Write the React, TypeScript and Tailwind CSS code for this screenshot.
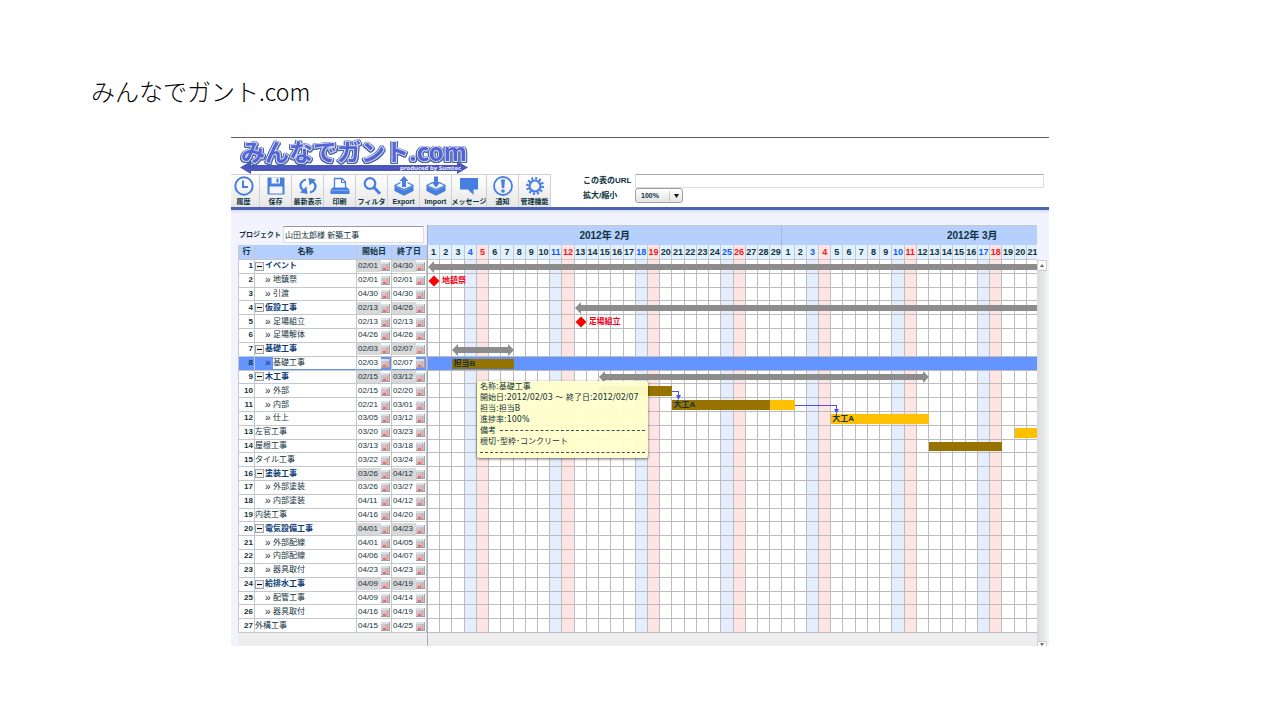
import type { ReactNode } from "react";
import clsx from "clsx";

type Kind = "group" | "child" | "task";

type Row = {
  name: string;
  start: string;
  end: string;
  kind: Kind;
};

const rows: Row[] = [
  { name: "イベント", start: "02/01", end: "04/30", kind: "group" },
  { name: "地鎮祭", start: "02/01", end: "02/01", kind: "child" },
  { name: "引渡", start: "04/30", end: "04/30", kind: "child" },
  { name: "仮設工事", start: "02/13", end: "04/26", kind: "group" },
  { name: "足場組立", start: "02/13", end: "02/13", kind: "child" },
  { name: "足場解体", start: "04/26", end: "04/26", kind: "child" },
  { name: "基礎工事", start: "02/03", end: "02/07", kind: "group" },
  { name: "基礎工事", start: "02/03", end: "02/07", kind: "child" },
  { name: "木工事", start: "02/15", end: "03/12", kind: "group" },
  { name: "外部", start: "02/15", end: "02/20", kind: "child" },
  { name: "内部", start: "02/21", end: "03/01", kind: "child" },
  { name: "仕上", start: "03/05", end: "03/12", kind: "child" },
  { name: "左官工事", start: "03/20", end: "03/23", kind: "task" },
  { name: "屋根工事", start: "03/13", end: "03/18", kind: "task" },
  { name: "タイル工事", start: "03/22", end: "03/24", kind: "task" },
  { name: "塗装工事", start: "03/26", end: "04/12", kind: "group" },
  { name: "外部塗装", start: "03/26", end: "03/27", kind: "child" },
  { name: "内部塗装", start: "04/11", end: "04/12", kind: "child" },
  { name: "内装工事", start: "04/16", end: "04/20", kind: "task" },
  { name: "電気設備工事", start: "04/01", end: "04/23", kind: "group" },
  { name: "外部配線", start: "04/01", end: "04/05", kind: "child" },
  { name: "内部配線", start: "04/06", end: "04/07", kind: "child" },
  { name: "器具取付", start: "04/23", end: "04/23", kind: "child" },
  { name: "給排水工事", start: "04/09", end: "04/19", kind: "group" },
  { name: "配管工事", start: "04/09", end: "04/14", kind: "child" },
  { name: "器具取付", start: "04/16", end: "04/19", kind: "child" },
  { name: "外構工事", start: "04/15", end: "04/25", kind: "task" },
];

const selectedRow = 8;

// 2012/02/01 is a Wednesday; day 1 to 29 is February, the rest March
const days = Array.from({ length: 50 }, (_, i) => ({
  label: i < 29 ? i + 1 : i - 28,
  saturday: i % 7 === 3,
  sunday: i % 7 === 4,
}));

type Bar = { row: number; from: number; to: number; label?: string; done: boolean };

const bars: Bar[] = [
  { row: 8, from: 3, to: 7, label: "担当B", done: true },
  { row: 10, from: 15, to: 20, label: "大工A", done: true },
  { row: 11, from: 21, to: 28, label: "大工A", done: true },
  { row: 11, from: 29, to: 30, done: false },
  { row: 12, from: 34, to: 41, label: "大工A", done: false },
  { row: 13, from: 49, to: 50, done: false },
  { row: 14, from: 42, to: 47, done: true },
];

const summaries = [
  { row: 1, from: 1, to: 50, open: true },
  { row: 4, from: 13, to: 50, open: true },
  { row: 7, from: 3, to: 7, open: false },
  { row: 9, from: 15, to: 41, open: false },
];

const milestones = [
  { row: 2, day: 1, label: "地鎮祭" },
  { row: 5, day: 13, label: "足場組立" },
];

const links = [
  { row: 10, from: 21, to: 21 },
  { row: 11, from: 31, to: 34 },
];

function Icon({ children }: { children: ReactNode }) {
  return (
    <svg viewBox="0 0 20 20" className="h-5 w-5 shrink-0" fill="none" stroke="#477fe0" strokeWidth="2" aria-hidden="true">
      {children}
    </svg>
  );
}

const tools: { label: string; width: string; icon: ReactNode }[] = [
  {
    label: "履歴",
    width: "w-[29px] pr-[3px]",
    icon: (
      <Icon>
        <circle cx="10" cy="10" r="8.7" />
        <path d="M9 4.5V11h5" />
      </Icon>
    ),
  },
  {
    label: "保存",
    width: "w-8",
    icon: (
      <Icon>
        <path d="M1.5 1.5h17v17h-17z" fill="#477fe0" stroke="none" />
        <path d="M5.5 1.5h8.5v6H5.5z" fill="#f4f6fb" stroke="none" />
        <path d="M10.5 2.5h2v4h-2z" fill="#477fe0" stroke="none" />
        <path d="M3.5 10.5h13v7h-13z" fill="#f4f6fb" stroke="none" />
      </Icon>
    ),
  },
  {
    label: "最新表示",
    width: "w-8",
    icon: (
      <Icon>
        <path d="M8 3.5C3.5 4.5 1 9 3.500 12.500L6 15" strokeWidth="2.200" />
        <path d="M2 16.500 9.500 18 8.500 10.500z" fill="#477fe0" stroke="none" />
        <path d="M12 16.500C16.500 15.500 19 11 16.500 7.500L14 5" strokeWidth="2.200" />
        <path d="M18 3.500 10.500 2l1 7.500z" fill="#477fe0" stroke="none" />
      </Icon>
    ),
  },
  {
    label: "印刷",
    width: "w-8",
    icon: (
      <Icon>
        <path d="M4.5 12V2.5H12l3.5 3.5v6" strokeWidth="1.3" fill="#fff" />
        <path d="M11.5 2.5v4h4" strokeWidth="1.2" />
        <path d="M2.5 11.5h15l2 2.5v4H.5v-4z" fill="#477fe0" stroke="none" />
        <path d="M1.5 14.5h17" stroke="#8fb3f0" strokeWidth="0.8" />
      </Icon>
    ),
  },
  {
    label: "フィルタ",
    width: "w-8",
    icon: (
      <Icon>
        <circle cx="8" cy="7.5" r="5.3" strokeWidth="2.2" />
        <path d="m12 11.5 6 6.200" strokeWidth="3" />
      </Icon>
    ),
  },
  {
    label: "Export",
    width: "w-8",
    icon: (
      <Icon>
        <path d="M.5 10 10 14.5 19.5 10v5L10 19.800.5 15z" fill="#477fe0" stroke="none" />
        <path d="M6.500 6.500.8 9.500 10 13.500l9.200-4-5.700-3" strokeWidth="1.3" />
        <path d="M10 0 14.500 5H12v6H8V5H5.500z" fill="#477fe0" stroke="none" />
      </Icon>
    ),
  },
  {
    label: "Import",
    width: "w-8",
    icon: (
      <Icon>
        <path d="M.5 10 10 14.5 19.5 10v5L10 19.800.5 15z" fill="#477fe0" stroke="none" />
        <path d="M6.500 6.500.8 9.500 10 13.500l9.200-4-5.700-3" strokeWidth="1.3" />
        <path d="M8 .5h4V6h2.500L10 11.500 5.500 6H8z" fill="#477fe0" stroke="none" />
      </Icon>
    ),
  },
  {
    label: "メッセージ",
    width: "w-[35px]",
    icon: (
      <Icon>
        <path d="M1 2h18v11.500h-4.500V19L9 13.500H1z" fill="#477fe0" stroke="none" />
      </Icon>
    ),
  },
  {
    label: "通知",
    width: "w-8",
    icon: (
      <Icon>
        <circle cx="10" cy="10" r="9" strokeWidth="1.8" />
        <path d="M8 3.500h4L11.200 12H8.800z" fill="#477fe0" stroke="none" />
        <circle cx="10" cy="15" r="1.800" fill="#477fe0" stroke="none" />
      </Icon>
    ),
  },
  {
    label: "管理機能",
    width: "w-8",
    icon: (
      <Icon>
        <circle cx="10" cy="10" r="5.5" strokeWidth="2.2" />
        <circle cx="10" cy="10" r="7.7" strokeWidth="2.6" strokeDasharray="2.015 2.015" />
      </Icon>
    ),
  },
];

function Logo() {
  return (
    <svg viewBox="0 0 240 36" className="block h-9 w-60 overflow-visible font-['Noto_Sans_CJK_JP',sans-serif]">
      <path d="M9 29.500 20 23v4h206v-4l11 6.500L226 36v-3H20v3z" fill="#4c57bd" />
      <text
        x="10"
        y="23"
        fontSize="24"
        fontWeight="700"
        fill="#5563d8"
        stroke="#d5e0f5"
        strokeWidth="2"
        strokeLinejoin="round"
        className="[filter:drop-shadow(1px_0_0_#46609c)_drop-shadow(-1px_0_0_#46609c)_drop-shadow(0_1px_0_#46609c)] [paint-order:stroke]"
      >
        みんなでガント.com
      </text>
      <text x="169" y="32" fontSize="6" fontWeight="700" fill="#eef" className="font-['Open_Sans',sans-serif]">
        produced by Sumtec
      </text>
    </svg>
  );
}

function Toolbar() {
  return (
    <header className="border-t border-[#606060] bg-white">
      <Logo />
      <div className="flex items-start">
        <div className="flex shrink-0">
          {tools.map((tool) => (
            <button
              key={tool.label}
              type="button"
              className={clsx(
                "flex h-[33px] flex-col items-center overflow-hidden border-t border-r border-[#d0d0d0] bg-linear-to-b from-white to-[#e6e6e6] pt-px text-[7px] leading-[12px] font-bold whitespace-nowrap text-[#0b333c]",
                tool.width,
              )}
            >
              {tool.icon}
              <span>{tool.label}</span>
            </button>
          ))}
        </div>
        <form className="ml-8 grid min-w-0 flex-1 grid-cols-[52px_1fr] items-center pr-[5px] text-[8px] leading-3 font-bold text-[#0b333c]">
          <label htmlFor="url">この表のURL</label>
          <input
            id="url"
            type="text"
            className="h-3.5 w-full border border-[#ddd] border-t-[#aaa] bg-white px-1 font-normal outline-none"
          />
          <label htmlFor="zoom">拡大/縮小</label>
          <div className="grid w-12 items-center">
            <select
              id="zoom"
              defaultValue="100"
              className="col-start-1 row-start-1 h-[15px] w-12 appearance-none rounded-[3px] border border-[#a0a0a0] bg-linear-to-b from-white to-[#e4e4e4] pl-[5px] text-[7px] leading-3 font-bold"
            >
              <option value="100">100%</option>
              <option value="200">200%</option>
            </select>
            <span className="pointer-events-none col-start-1 row-start-1 mr-1 flex h-2.5 items-center justify-self-end border-l border-[#ccc] pl-1">
              <svg viewBox="0 0 5 4" className="h-1 w-[5px]" aria-hidden="true">
                <path d="M0 0h5L2.500 4z" fill="#111" />
              </svg>
            </span>
          </div>
        </form>
      </div>
      <div className="h-[3px] bg-[#4c65b3]" />
    </header>
  );
}

function CalendarIcon() {
  return (
    <svg viewBox="0 0 10 10" className="block h-2.5 w-2.5" aria-hidden="true">
      <path d="M0 1h9v9H0z" fill="#c6c9ce" />
      <path d="M0 1h9v2H0z" fill="#d8e0e8" />
      <path d="M0 9.500h9M8.500 1v9M6.500 3v7" stroke="#94989e" strokeWidth="0.8" />
      <path d="M1 9V6h2V5h2V3h1.500v6z" fill="#eeaeac" />
      <path d="M2 7h3v2H2z" fill="#dc7470" />
    </svg>
  );
}

function DateCell({ value, grouped, selected }: { value: string; grouped: boolean; selected: boolean }) {
  return (
    <td className={clsx("border-r border-b border-[#c4c8ca] p-0", selected && "bg-[#6495ff]")}>
      <div className="flex items-center justify-between">
        <span className={clsx("w-6 pl-px leading-[12px]", grouped ? "bg-[#d9d9d9]" : "bg-white")}>{value}</span>
        <button type="button" aria-label={`${value} カレンダー`}>
          <CalendarIcon />
        </button>
      </div>
    </td>
  );
}

function NameCell({ row, selected }: { row: Row; selected: boolean }) {
  return (
    <td className={clsx("border-r border-b border-[#c4c8ca] p-0", selected && "bg-[#6495ff]")}>
      <div className="flex items-center whitespace-nowrap">
        {row.kind === "group" && (
          <button
            type="button"
            aria-label={`${row.name}を閉じる`}
            className="mr-px flex h-[9px] w-[9px] items-center justify-center border border-[#9aa4b0] bg-[#f4f1ea]"
          >
            <span className="h-px w-[5px] bg-black" />
          </button>
        )}
        {row.kind === "child" && <span className="w-[18px] pl-2.5 text-[10px] leading-[12px]">»</span>}
        <span
          className={clsx(
            "flex-1 leading-[12px]",
            row.kind === "group" && "font-bold text-[#0a3c78]",
            selected && "bg-white",
          )}
        >
          {row.name}
        </span>
      </div>
    </td>
  );
}

function TaskTable() {
  return (
    <section className="w-[190px] shrink-0 border-r border-[#a8acb0] bg-[#eee]">
      <div className="flex h-5 items-center justify-between bg-[#f3f3ff] pr-[3px]">
        <label htmlFor="project" className="pl-px text-[7px] font-bold whitespace-nowrap">
          プロジェクト
        </label>
        <input
          id="project"
          type="text"
          defaultValue="山田太郎様 新築工事"
          className="mb-0.5 h-[17px] w-[141px] border border-[#ddd] border-t-[#999] bg-white px-px text-[8px] outline-none"
        />
      </div>
      <table className="h-[388px] w-full table-fixed border-separate border-spacing-0 border-l border-[#c4c8ca] bg-white text-[8px]">
        <colgroup>
          <col className="w-4" />
          <col />
          <col className="w-[35px]" />
          <col className="w-[35px]" />
        </colgroup>
        <thead>
          <tr className="h-[15px] bg-[#b5cfff] leading-[12px]">
            {["行", "名称", "開始日", "終了日"].map((head) => (
              <th key={head} scope="col" className="h-[15px] border-r border-b border-[#c4c8ca] p-0">
                {head}
              </th>
            ))}
          </tr>
        </thead>
        <tbody>
          {rows.map((row, i) => {
            const selected = i + 1 === selectedRow;
            return (
              <tr key={i}>
                <th
                  scope="row"
                  className={clsx(
                    "border-r border-b border-[#c4c8ca] p-0 pr-px text-right leading-[12px]",
                    selected && "bg-[#6495ff]",
                  )}
                >
                  {i + 1}
                </th>
                <NameCell row={row} selected={selected} />
                <DateCell value={row.start} grouped={row.kind === "group"} selected={selected} />
                <DateCell value={row.end} grouped={row.kind === "group"} selected={selected} />
              </tr>
            );
          })}
        </tbody>
      </table>
    </section>
  );
}

function Tooltip() {
  return (
    <div
      role="tooltip"
      className="absolute top-[121px] left-[49px] z-30 w-[171px] overflow-hidden rounded-xs bg-[#ffffcc]/95 px-[3px] font-['DejaVu_Sans','Noto_Sans_CJK_JP',sans-serif] text-[8px] leading-[11px] whitespace-nowrap shadow-[0_1px_3px_rgba(0,0,0,0.6)]"
    >
      <p>名称:基礎工事</p>
      <p>開始日:2012/02/03 ～ 終了日:2012/02/07</p>
      <p>担当:担当B</p>
      <p>進捗率:100%</p>
      <p className="flex items-center gap-1">
        備考 <span className="flex-1 border-t border-dashed border-[#3c5058]" />
      </p>
      <p>根切･型枠･コンクリート</p>
      <p className="flex h-[11px] items-center">
        <span className="flex-1 border-t border-dashed border-[#3c5058]" />
      </p>
    </div>
  );
}

function Chart() {
  return (
    <section className="min-w-0 flex-1 overflow-hidden bg-[#eee] pb-[13px]">
      <div className="-mr-0.5 grid h-5 grid-cols-[29fr_21fr] border-t border-[#c4c8ca] bg-[#b5cfff] text-center text-[10px] leading-5 font-bold">
        <div className="border-r border-[#a9b8d4]">2012年 2月</div>
        <div className="overflow-hidden">
          <div className="w-[148%]">2012年 3月</div>
        </div>
      </div>
      <div className="-mr-0.5 grid h-[15px] grid-cols-[repeat(50,minmax(0,1fr))] overflow-hidden bg-[#e1f1ff] text-center text-[9px] leading-[14px] font-bold">
        {days.map((day, i) => (
          <div
            key={i}
            className={clsx(
              "flex justify-center border-r border-b border-[#c4c8ca]",
              day.saturday && "text-[#1458ff]",
              day.sunday && "bg-[#ffe4e4] text-[#f01828]",
            )}
          >
            {day.label}
          </div>
        ))}
      </div>
      <div className="relative -mr-0.5">
        <div className="grid h-[373px] grid-cols-[repeat(50,minmax(0,1fr))] grid-rows-[repeat(27,minmax(0,1fr))] overflow-hidden bg-white">
          {days.map((day, i) => (
            <div
              key={i}
              className={clsx(
                "row-span-full border-r border-[#bcbcbc]",
                day.saturday && "bg-[#e4eeff]",
                day.sunday && "bg-[#ffe4e4]",
              )}
              style={{ gridColumn: i + 1 }}
            />
          ))}
          {rows.map((_, i) => (
            <div
              key={i}
              className={clsx("col-span-full border-b border-[#bcbcbc]", i + 1 === selectedRow && "bg-[#6495ff]")}
              style={{ gridRow: i + 1 }}
            />
          ))}
          {summaries.map((s) => (
            <div
              key={s.row}
              className="z-10 flex items-center text-[#8c8c8c]"
              style={{ gridRow: s.row, gridColumn: `${s.from} / ${s.to + 1}` }}
            >
              <svg viewBox="0 0 6 12" className="h-3 w-1.5 shrink-0" aria-hidden="true">
                <path d="M6 0v12L0 6z" fill="currentColor" />
              </svg>
              <span className="h-1.5 flex-1 bg-current" />
              {!s.open && (
                <svg viewBox="0 0 6 12" className="h-3 w-1.5 shrink-0" aria-hidden="true">
                  <path d="M0 0v12l6-6z" fill="currentColor" />
                </svg>
              )}
            </div>
          ))}
          {milestones.map((m) => (
            <div
              key={m.row}
              className="z-10 flex items-center gap-0.5 text-[8px] font-bold whitespace-nowrap text-[#f00018]"
              style={{ gridRow: m.row, gridColumn: `${m.day} / span 6` }}
            >
              <svg viewBox="0 0 12 12" className="h-3 w-3 shrink-0" aria-hidden="true">
                <path d="M6 .5 11.5 6 6 11.5.5 6z" fill="#ff0000" />
              </svg>
              {m.label}
            </div>
          ))}
          {bars.map((b) => (
            <div
              key={`${b.row}-${b.from}`}
              className={clsx(
                "z-10 my-0.5 flex items-center pl-px text-[8px] leading-[10px] font-bold whitespace-nowrap",
                b.done ? "bg-[#967200]" : "bg-[#ffc000]",
              )}
              style={{ gridRow: b.row, gridColumn: `${b.from} / ${b.to + 1}` }}
            >
              {b.label}
            </div>
          ))}
          {links.map((l) => (
            <div
              key={l.row}
              className="z-20 flex flex-col items-end pt-[7px]"
              style={{ gridRow: `${l.row} / span 2`, gridColumn: `${l.from} / ${l.to + 1}` }}
            >
              <div className="mr-1.5 h-1 self-stretch border-t border-r border-[#5050f0]" />
              <svg viewBox="0 0 5 5" className="mr-1 h-[5px] w-[5px]" aria-hidden="true">
                <path d="M0 0h5L2.500 5z" fill="#5050f0" />
              </svg>
            </div>
          ))}
        </div>
        <Tooltip />
      </div>
    </section>
  );
}

function Scrollbar() {
  return (
    <div className="mt-[35px] flex w-2.5 shrink-0 flex-col justify-between bg-linear-to-r from-[#d8dadd] to-[#f0f0f0]">
      <button
        type="button"
        aria-label="上へスクロール"
        className="flex h-[11px] items-center justify-center border border-[#ccc] bg-[#fafafa]"
      >
        <svg viewBox="0 0 4 3" className="h-[3px] w-1" aria-hidden="true">
          <path d="M0 3h4L2 0z" fill="#666" />
        </svg>
      </button>
      <button
        type="button"
        aria-label="下へスクロール"
        className="flex h-[5px] items-center justify-center border border-b-0 border-[#ccc] bg-[#fafafa]"
      >
        <svg viewBox="0 0 4 3" className="h-[3px] w-1" aria-hidden="true">
          <path d="M0 0h4L2 3z" fill="#666" />
        </svg>
      </button>
    </div>
  );
}

export default function App() {
  return (
    <main className="min-h-screen bg-white pt-[73px] font-['Liberation_Sans','Noto_Sans_CJK_JP',sans-serif] text-[#12323c]">
      <h1 className="pl-[91px] font-['Noto_Sans_CJK_JP',sans-serif] text-2xl leading-9 font-light text-black">
        みんなでガント<span className="text-[23px]">.com</span>
      </h1>
      <div className="mx-auto mt-7 w-full max-w-[818px]">
        <Toolbar />
        <div className="flex bg-[#f3f3ff] bg-linear-to-b from-[#dcdcf2] to-[#f3f3ff] to-[4px] pt-[15px] pr-0.5 pl-[7px]">
          <TaskTable />
          <Chart />
          <Scrollbar />
        </div>
      </div>
    </main>
  );
}
